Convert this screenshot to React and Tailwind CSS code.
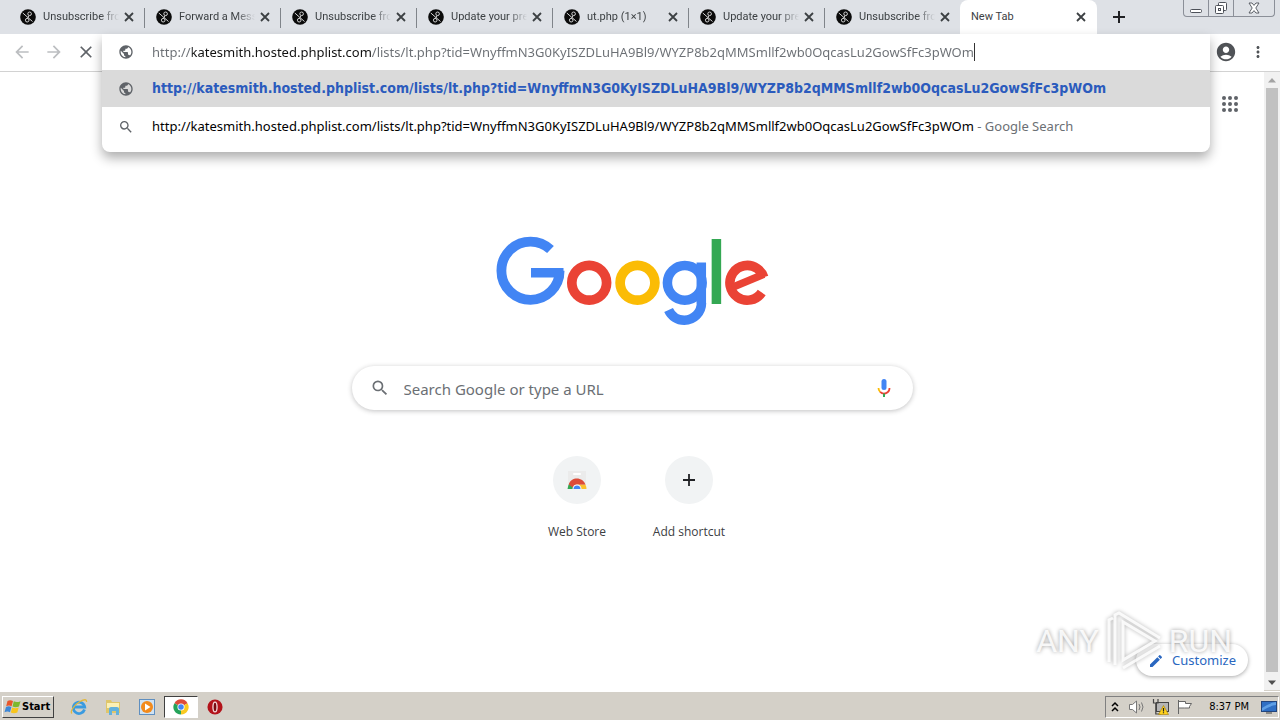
import { MdPublic, MdSearch, MdArrowBack, MdArrowForward, MdClose, MdMoreVert, MdAccountCircle, MdEdit } from 'react-icons/md'

const HOST = 'katesmith.hosted.phplist.com'
const PATH = '/lists/lt.php?tid=WnyffmN3G0KyISZDLuHA9Bl9/WYZP8b2qMMSmllf2wb0OqcasLu2GowSfFc3pWOm'
const URL_TEXT = `http://${HOST}${PATH}`

const tabs = [
  'Unsubscribe from',
  'Forward a Message',
  'Unsubscribe from',
  'Update your preferences',
  'ut.php (1×1)',
  'Update your preferences',
  'Unsubscribe from',
]

// round black favicon with the looped ribbon
function PhpListIcon() {
  return (
    <svg viewBox="0 0 16 16" className="size-4 shrink-0" aria-hidden="true">
      <circle cx="8" cy="8" r="7.8" fill="#0b0b0b" />
      <g fill="none" stroke="#d4d4d4" strokeWidth="1">
        <circle cx="9.6" cy="4.8" r="1.8" />
        <circle cx="7.2" cy="11.2" r="1.8" />
        <path d="M2.8 4 12.500 12.500M9 6.600 7.600 9.400" />
      </g>
    </svg>
  )
}

function CloseGlyph() {
  return (
    <svg viewBox="0 0 10 10" className="size-[10px]" stroke="#3c4043" strokeWidth="1.8" aria-hidden="true">
      <path d="M1 1l8 8M9 1L1 9" />
    </svg>
  )
}

function Tab({ title }) {
  return (
    <div className="relative flex w-[136px] min-w-0 items-center pl-3 pr-[10px]">
      <PhpListIcon />
      <span className="ml-[7px] flex-1 overflow-hidden whitespace-nowrap mask-r-from-75%">{title}</span>
      <button aria-label="Close tab" className="ml-[5px]"><CloseGlyph /></button>
      <span className="absolute -right-px top-2 h-5 w-px bg-[#80848a]" />
    </div>
  )
}

function WindowControls() {
  return (
    <div className="ml-auto mr-[5px] flex h-[17px] self-start rounded-b-[4px] border border-t-0 border-[#8b8f98] text-[#4d5159]">
      <button aria-label="Minimize" className="flex w-[25px] items-center justify-center border-r border-[#8b8f98]">
        <svg viewBox="0 0 12 12" className="size-3" fill="#fff" stroke="currentColor">
          <rect x="0.5" y="7.5" width="11" height="3" rx="1" />
        </svg>
      </button>
      <button aria-label="Restore" className="flex w-[25px] items-center justify-center border-r border-[#8b8f98]">
        <svg viewBox="0 0 12 12" className="size-3" fill="#fff" stroke="currentColor">
          <rect x="3.5" y="0.5" width="8" height="8" rx="1" />
          <rect x="0.5" y="3.5" width="8" height="8" rx="1" />
          <rect x="3.5" y="6.5" width="2" height="2" />
        </svg>
      </button>
      <button aria-label="Close" className="flex w-10 items-center justify-center">
        <svg viewBox="0 0 12 12" className="size-3" fill="#fff" stroke="currentColor" strokeWidth="0.9">
          <path d="M1 1h3l2 2.4L8 1h3L7.8 6 11 11H8L6 8.600 4 11H1l3.200-5z" />
        </svg>
      </button>
    </div>
  )
}

function TabStrip() {
  return (
    <div className="flex h-[34px] bg-[#dee1e6] pl-2 font-['Roboto',sans-serif] text-[11px] text-[#3c4043]">
      {tabs.map((t, i) => <Tab key={i} title={t} />)}
      <div className="relative flex w-[137px] items-center rounded-t-lg bg-white pl-[11px] pr-[11px]">
        <span className="flex-1">New Tab</span>
        <button aria-label="Close tab"><CloseGlyph /></button>
      </div>
      <button aria-label="New tab" className="ml-4">
        <svg viewBox="0 0 12 12" className="size-3" stroke="#202124" strokeWidth="2"><path d="M6 0v12M0 6h12" /></svg>
      </button>
      <WindowControls />
    </div>
  )
}

function Omnibox() {
  return (
    <div className="relative z-20 flex-1 self-start">
      <div className="absolute inset-x-0 top-0 overflow-hidden rounded-b-lg bg-white text-[13px] shadow-[0_6px_12px_rgba(0,0,0,0.32)]">
        <div className="flex h-9 items-center pl-4">
          <MdPublic className="size-4 text-[#5f6368]" />
          {/* host part is darker than the rest of the address */}
          <input
            aria-label="Address and search bar"
            defaultValue={URL_TEXT}
            className="ml-[18px] field-sizing-content bg-[linear-gradient(90deg,#6b6f74_40px,#111_40px,#111_219px,#6b6f74_219px)] bg-clip-text pt-px text-transparent outline-none"
          />
          <span className="h-[18px] w-px bg-[#333]" />
        </div>
        <a href="#go" className="flex h-[37px] items-center bg-[#dadada] pl-4 font-['DejaVu_Sans_Condensed','DejaVu_Sans',sans-serif] text-[14px] font-bold text-[#2b5bbd]">
          <MdPublic className="mr-[18px] size-4 text-[#5f6368]" />
          {URL_TEXT}
        </a>
        <a href="#search" className="mb-2 flex h-[37px] items-center whitespace-pre pl-4 pt-[2px] text-black">
          <MdSearch className="mr-[18px] size-4 text-[#5f6368]" />
          {URL_TEXT}
          <span className="text-[#6b6f74]"> - Google Search</span>
        </a>
      </div>
    </div>
  )
}

function Toolbar() {
  return (
    <div className="flex h-[38px] border-b border-[#d2d2d2] bg-white">
      <div className="flex items-center pb-px pl-[6px] text-[#bcbec1]">
        <button aria-label="Back" className="flex w-8 justify-center"><MdArrowBack className="size-5" /></button>
        <button aria-label="Forward" className="flex w-8 justify-center"><MdArrowForward className="size-5" /></button>
        <button aria-label="Stop" className="flex w-8 justify-center text-[#5f6368]"><MdClose className="size-5" /></button>
      </div>
      <Omnibox />
      <div className="flex items-center pb-px pr-[6px] text-[#505357]">
        <button aria-label="Profile" className="flex w-8 justify-center"><MdAccountCircle className="size-[22px]" /></button>
        <button aria-label="Menu" className="flex w-8 justify-center"><MdMoreVert className="size-[18px]" /></button>
      </div>
    </div>
  )
}

function GoogleLogo() {
  return (
    <svg viewBox="0 0 272 90" className="h-[90px] w-[272px] overflow-visible" fill="none" role="img" aria-label="Google">
      <g stroke="#4285f4" strokeWidth="9.800">
        <circle cx="34.500" cy="34.700" r="29.100" strokeDasharray="158.900 200" />
        <line x1="35" y1="36.700" x2="67.500" y2="36.700" strokeWidth="9.400" />
      </g>
      <circle cx="93.200" cy="46.800" r="17.400" stroke="#ea4335" strokeWidth="9.700" />
      <circle cx="141.500" cy="46.800" r="17.400" stroke="#fbbc05" strokeWidth="9.700" />
      <g stroke="#4285f4" strokeWidth="9.500">
        <circle cx="188.800" cy="46.800" r="17.400" />
        <line x1="205.300" y1="26.500" x2="205.300" y2="67.500" />
        <circle cx="188.300" cy="67" r="17.200" strokeDasharray="46.500 200" />
      </g>
      <line x1="220.400" y1="3" x2="220.400" y2="68" stroke="#34a853" strokeWidth="9.500" />
      <g stroke="#ea4335" strokeWidth="9.500">
        <circle cx="251.300" cy="46.800" r="17.400" strokeDasharray="92.700 200" transform="rotate(34 251.300 46.800)" />
        <line x1="236" y1="51.500" x2="267.800" y2="38.300" strokeWidth="7.500" />
      </g>
    </svg>
  )
}

function MicIcon() {
  return (
    <svg viewBox="0 0 24 24" className="size-6" fill="none" aria-hidden="true">
      <rect x="9.500" y="3" width="5" height="11" rx="2.500" fill="#4285f4" />
      <path d="M6.500 12a5.500 5.500 0 0 0 1.600 3.900" stroke="#fbbc05" strokeWidth="1.800" />
      <path d="M8.100 15.900a5.500 5.500 0 0 0 9.400-3.900" stroke="#ea4335" strokeWidth="1.800" />
      <path d="M12 17.500V21" stroke="#34a853" strokeWidth="2" />
    </svg>
  )
}

function AppsIcon() {
  return (
    <svg viewBox="0 0 16 16" className="size-4" fill="#5f6368" aria-hidden="true">
      {[2, 8, 14].map((y) => [2, 8, 14].map((x) => <circle key={`${x}-${y}`} cx={x} cy={y} r="2" />))}
    </svg>
  )
}

function WebStoreIcon() {
  return (
    <svg viewBox="0 0 24 24" className="size-6" fill="none" aria-hidden="true">
      <path d="M3 3h18v17H3z" fill="#ebebeb" />
      <rect x="8" y="5" width="8" height="2" rx="1" fill="#fff" />
      <path d="M2.500 21a9.500 9.500 0 0 1 2.800-6.700L9 18v3z" fill="#34a853" />
      <path d="M3.800 16.500C6 8.500 18 8.500 20.500 16.800H12a4 4 0 0 0-4 3z" fill="#dd4b39" />
      <path d="M12 16.800h8.500a9.500 9.500 0 0 1 1 4.200H15z" fill="#fbc02d" />
      <path d="M7.500 21a4.500 4.500 0 0 1 9 0z" fill="#fff" />
      <path d="M8.500 21a3.500 3.500 0 0 1 7 0z" fill="#4285f4" />
    </svg>
  )
}

function Shortcut({ label, children }) {
  return (
    <a href="#shortcut" className="flex w-28 flex-col items-center gap-5 font-['Open_Sans',sans-serif] text-[12px] leading-4 text-[#3c4043]">
      <span className="flex size-12 items-center justify-center rounded-full bg-[#f1f3f4]">{children}</span>
      {label}
    </a>
  )
}

function Watermark() {
  return (
    <div className="pointer-events-none absolute bottom-5 right-8 flex items-center gap-[6px] font-['Roboto',sans-serif] text-[32px] leading-none text-white/85 [text-shadow:0_0_4px_rgba(0,0,0,0.4)]">
      <span>ANY</span>
      <svg viewBox="0 0 58 62" className="h-[62px] w-[58px] drop-shadow-[0_0_2px_rgba(0,0,0,0.35)]" fill="none" stroke="#fff" strokeOpacity="0.85" strokeWidth="3" aria-hidden="true">
        <path d="M4 52V10l4-2M10 55V5l4-2 41 25" />
        <path d="M18 12v38l32-19zM18 58l37-22" />
      </svg>
      <span>RUN</span>
    </div>
  )
}

function NewTabPage() {
  return (
    <main className="relative flex flex-1 flex-col bg-white">
      <div className="flex h-16 items-center justify-end pr-[26px]">
        <button aria-label="Google apps"><AppsIcon /></button>
      </div>
      <div className="flex flex-col items-center pt-[100px]">
        <GoogleLogo />
        <form className="mt-10 flex h-11 w-full max-w-[561px] items-center rounded-full pl-[18px] pr-[17px] shadow-[0_1px_5px_rgba(32,33,36,0.28)]">
          <MdSearch className="size-5 shrink-0 text-[#6b6f74]" />
          <input
            aria-label="Search"
            placeholder="Search Google or type a URL"
            className="ml-[14px] flex-1 pt-[2px] text-[15px] outline-none placeholder:text-[#6b6f74]"
          />
          <button type="button" aria-label="Search by voice"><MicIcon /></button>
        </form>
        <div className="mt-[46px] flex pl-[2px]">
          <Shortcut label="Web Store"><WebStoreIcon /></Shortcut>
          <Shortcut label="Add shortcut">
            <svg viewBox="0 0 12 12" className="size-3" stroke="#202124" strokeWidth="1.8"><path d="M6 0v12M0 6h12" /></svg>
          </Shortcut>
        </div>
      </div>
      <button className="absolute bottom-4 right-4 flex h-8 items-center gap-2 rounded-full bg-white px-3 pt-px text-[13px] text-[#2a67c0] shadow-[0_1px_4px_rgba(0,0,0,0.35)]">
        <MdEdit className="size-4" />
        Customize
      </button>
      <Watermark />
    </main>
  )
}

function Scrollbar() {
  return (
    <div className="flex w-4 flex-col items-center bg-[#f1f1f1] text-[#505050]">
      <svg viewBox="0 0 16 16" className="size-4 text-[#a3a3a3]" fill="currentColor"><path d="M4 10.500 8 6l4 4.500z" /></svg>
      <div className="w-3 flex-1 bg-[#c1c1c1]" />
      <svg viewBox="0 0 16 16" className="my-[2px] size-4" fill="currentColor"><path d="M4 6.500 8 11l4-4.500z" /></svg>
    </div>
  )
}

function StartFlag() {
  return (
    <svg viewBox="0 0 18 16" className="h-4 w-[18px]" aria-hidden="true">
      <path d="M3.500 2C5.500.8 7 1 9 2L7.600 7.200C5.800 6.300 4.200 6.200 2.200 7.200z" fill="#e8562a" />
      <path d="M9.800 2.300c2 1 4 1 6.700-.1L15 7.500c-2.500 1-4.400 1-6.500 0z" fill="#7cb82f" />
      <path d="M2 8c2-1 3.600-.9 5.400 0L6 13.200C4.200 12.300 2.500 12.300.500 13.300z" fill="#3d87d6" />
      <path d="M8.200 8.400c2.200 1 4 1 6.500 0l-1.400 5.200c-2.400 1-4.400 1-6.500 0z" fill="#f8c51c" />
    </svg>
  )
}

function IeIcon() {
  return (
    <svg viewBox="0 0 18 18" className="size-[18px]" fill="none" aria-hidden="true">
      <path d="M14.500 11.500A5.700 5.700 0 1 1 14.700 9H4" stroke="#3a9be0" strokeWidth="2.800" />
      <path d="M2 15.500C-.5 14 4 7 10 3.500c4-2.300 7-2.500 6.500.5" stroke="#e3b83c" strokeWidth="1.300" />
    </svg>
  )
}

function FolderIcon() {
  return (
    <svg viewBox="0 0 18 18" className="size-[18px]" aria-hidden="true">
      <path d="M2 2h5l1 2h8v11H2z" fill="#dfc66a" />
      <path d="M3 5h12v5H3z" fill="#fbf0b5" />
      <path d="M5 17v-6q0-2 2-2h6q2 0 2 2v6h-3v-4H8v4z" fill="#62b1dc" />
    </svg>
  )
}

function PlayerIcon() {
  return (
    <svg viewBox="0 0 18 18" className="size-[18px]" aria-hidden="true">
      <rect x="1.500" y="1.500" width="15" height="15" fill="#cfe2f3" stroke="#5f8fc0" />
      <circle cx="9" cy="9" r="6" fill="#f28a1c" />
      <path d="M7 5.500 12.500 9 7 12.500z" fill="#fff" />
    </svg>
  )
}

function ChromeIcon() {
  return (
    <svg viewBox="0 0 18 18" className="size-4" aria-hidden="true">
      <path d="M9 9 1.600 4.700A8.500 8.500 0 0 1 16.400 4.700z" fill="#dd4b39" />
      <path d="M9 9 1.600 4.700A8.500 8.500 0 0 0 9 17.500z" fill="#25a35a" />
      <path d="M9 9V17.500A8.500 8.500 0 0 0 16.400 4.700z" fill="#f9c920" />
      <circle cx="9" cy="9" r="4" fill="#fff" />
      <circle cx="9" cy="9" r="3.100" fill="#4285f4" />
    </svg>
  )
}

function OperaIcon() {
  return (
    <svg viewBox="0 0 18 18" className="size-4" aria-hidden="true">
      <circle cx="9" cy="9" r="8.500" fill="#b3131b" />
      <ellipse cx="9" cy="9" rx="2.300" ry="5.500" fill="#7a0a10" stroke="#f3d9da" strokeWidth="1.500" />
    </svg>
  )
}

const launchers = [
  { name: 'Internet Explorer', Icon: IeIcon },
  { name: 'Explorer', Icon: FolderIcon },
  { name: 'Media Player', Icon: PlayerIcon },
  { name: 'Chrome', Icon: ChromeIcon, active: true },
  { name: 'Opera', Icon: OperaIcon },
]

function Tray() {
  return (
    <div className="ml-auto mr-px flex h-[22px] items-center border border-b-white border-l-[#808080] border-r-white border-t-[#808080] pl-[5px] pr-px">
      <svg viewBox="0 0 8 12" className="h-3 w-2" fill="none" stroke="#000" strokeWidth="1.500"><path d="M1 5l3-3 3 3M1 10l3-3 3 3" /></svg>
      <svg viewBox="0 0 18 18" className="ml-[9px] size-[18px]" fill="none" stroke="#777">
        <path d="M1.500 6.500h3L8.500 3v12l-4-3.500h-3z" fill="#fff" />
        <path d="M11 6q2 3 0 6M13.500 4.500q3 4.500 0 9" />
      </svg>
      <svg viewBox="0 0 18 18" className="ml-[6px] size-[18px]" fill="none">
        <rect x="4.500" y="4.500" width="12" height="9" fill="#b5b5b5" stroke="#444" />
        <path d="M1.500 1v4h4.500V1M3.800 5v11h5" stroke="#444" strokeWidth="1.200" />
        <path d="M11.500 7.500 16.500 16.500h-10z" fill="#ffd21c" stroke="#a37a00" strokeWidth="0.600" />
        <path d="M11.500 10v3.500M11.500 14.300v1" stroke="#222" strokeWidth="1.200" />
      </svg>
      <svg viewBox="0 0 18 18" className="ml-[6px] size-[18px]" stroke="#666" fill="#fff">
        <path d="M2.500 2v14M2.500 3.500h7v2h6l-2 3 0 1.500H8.500V10h-6z" />
      </svg>
      <span className="ml-[15px] text-[11px] text-black font-['DejaVu_Sans_Condensed','DejaVu_Sans',sans-serif]">8:37 PM</span>
      <svg viewBox="0 0 16 14" className="ml-3 h-[14px] w-4">
        <rect x="0.500" y="1.500" width="15" height="10" fill="#2f6fc4" stroke="#23457c" />
        <path d="M1 8q7-5 14-6v3Q8 6 1 11z" fill="#5fa0e6" />
        <path d="M5 13h6" stroke="#444" />
      </svg>
    </div>
  )
}

function Taskbar() {
  return (
    <footer className="flex h-7 items-center bg-[#d4d0c8] pt-[2px] shadow-[0_-1px_0_#fff,0_-2px_0_#d4d0c8]">
      <button className="ml-[2px] flex h-[22px] w-[52px] items-center border border-b-[#404040] border-l-white border-r-[#404040] border-t-white pl-px font-['DejaVu_Sans_Condensed','DejaVu_Sans',sans-serif] text-[11px] font-bold text-black">
        <StartFlag />
        Start
      </button>
      <div className="ml-2 flex items-center">
        {launchers.map(({ name, Icon, active }) => (
          <button
            key={name}
            aria-label={name}
            className={`flex h-[22px] w-[34px] items-center justify-center ${
              active ? 'border border-b-white border-l-[#404040] border-r-white border-t-[#404040] bg-white' : ''
            }`}
          >
            <Icon />
          </button>
        ))}
      </div>
      <Tray />
    </footer>
  )
}

export default function App() {
  return (
    <div className="flex h-screen flex-col overflow-hidden bg-white font-['Noto_Sans',sans-serif]">
      <TabStrip />
      <Toolbar />
      <div className="flex min-h-0 flex-1">
        <NewTabPage />
        <Scrollbar />
      </div>
      <Taskbar />
    </div>
  )
}
